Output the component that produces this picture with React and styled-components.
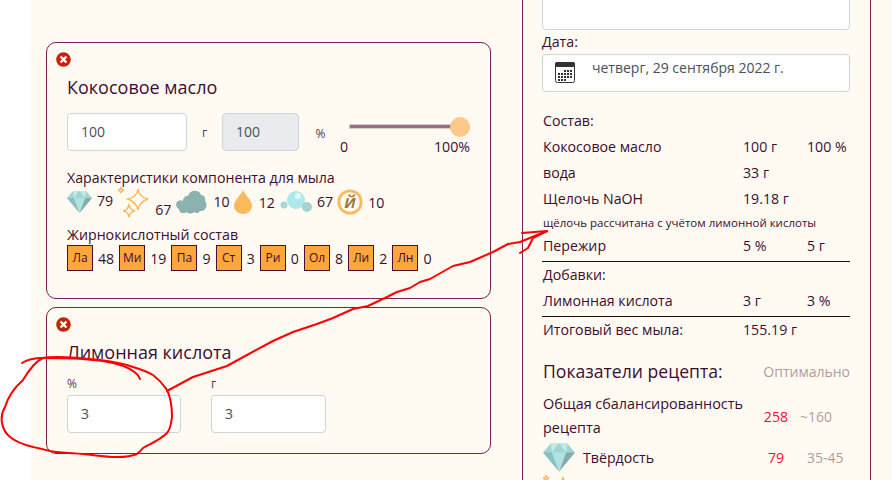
import React from "react";
import styled, { createGlobalStyle } from "styled-components";
import { FaTimesCircle } from "react-icons/fa";

const GlobalStyle = createGlobalStyle`
  html, body {
    margin: 0;
    padding: 0;
    background: #fff;
  }
  body {
    font-family: "Open Sans", "Noto Sans", sans-serif;
    font-size: 14.2px;
    color: #3d0c30;
  }
`;

const Page = styled.div`
  position: relative;
  width: 892px;
  height: 480px;
  overflow: hidden;
  padding-left: 31px;
  box-sizing: border-box;
`;

const Sheet = styled.div`
  display: flex;
  height: 100%;
  background: #fffbf2;
`;

const LeftColumn = styled.div`
  width: 445px;
  padding: 42px 31px 0 15px;
  display: flex;
  flex-direction: column;
  gap: 8px;
  flex-shrink: 0;
`;

const Card = styled.section`
  box-sizing: border-box;
  height: ${(p) => p.$height}px;
  flex-shrink: 0;
  border: 1px solid #7a1f50;
  border-radius: 10px;
  padding: 9px 20px 0;
`;

const RemoveButton = styled.button`
  display: block;
  border: 0;
  background: none;
  padding: 0;
  margin-left: -11px;
  width: 15px;
  height: 15px;
  color: #c5230f;
  font-size: 15px;
  line-height: 0;
`;

const CardTitle = styled.h3`
  margin: 7px 0 0;
  font-size: 18px;
  line-height: 26px;
  font-weight: 400;
`;

const InputRow = styled.div`
  display: flex;
  align-items: center;
  margin-top: 13px;
`;

const Field = styled.div`
  box-sizing: border-box;
  flex-shrink: 0;
  width: ${(p) => p.$width}px;
  height: 38px;
  line-height: 36px;
  padding: 0 13px;
  border: 1px solid #ced4da;
  border-radius: 4px;
  background: ${(p) => (p.$disabled ? "#e9ecef" : "#fff")};
  color: #495057;
  font-size: 14px;
`;

const Unit = styled.span`
  flex-shrink: 0;
  width: ${(p) => p.$width}px;
  text-align: center;
  font-size: 12px;
  color: #5a3355;
  padding-top: ${(p) => p.$drop || 0}px;
`;

const SliderBox = styled.div`
  flex-shrink: 0;
  width: 130px;
  height: 38px;
  margin-left: -2px;
`;

const SliderTrack = styled.div`
  position: relative;
  margin: 11px 2px 0 9px;
  height: 5px;
  background: #96707f;
  border-radius: 2px;
  box-shadow: 0 0 0 1px #d9cdc9 inset;
`;

const SliderThumb = styled.div`
  position: absolute;
  right: -2px;
  top: -7px;
  width: 20px;
  height: 20px;
  border-radius: 50%;
  background: #fdc88c;
`;

const SliderLabels = styled.div`
  display: flex;
  justify-content: space-between;
  margin-top: 8px;
  line-height: 20px;
`;

const SectionLabel = styled.div`
  margin-top: ${(p) => p.$top}px;
  line-height: ${(p) => p.$line || 20}px;
`;

const StatRow = styled.div`
  display: flex;
  align-items: center;
  height: 32px;
  margin-top: -1px;
`;

const StatValue = styled.span`
  margin: 0 ${(p) => p.$right}px ${(p) => p.$lift || 0}px ${(p) => p.$left}px;
  padding-top: ${(p) => p.$drop || 0}px;
`;

const ChipRow = styled.div`
  display: flex;
  align-items: center;
  gap: 5px;
`;

const Chip = styled.span`
  box-sizing: border-box;
  width: 26px;
  height: 26px;
  border: 1px solid #4d0f2f;
  background: #ffa63d;
  font-size: 12px;
  line-height: 24px;
  text-align: center;
`;

const ChipValue = styled.span`
  min-width: 8.2px;
`;

const LabeledFields = styled.div`
  display: flex;
  gap: 30px;
  margin-top: 10px;
`;

const LabeledField = styled.div`
  display: flex;
  flex-direction: column;
  gap: 2px;
`;

const SmallLabel = styled.label`
  font-size: 12px;
  line-height: 18px;
  color: #5a3355;
`;

const SidePanel = styled.aside`
  box-sizing: border-box;
  width: 349px;
  margin-top: -30px;
  height: 510px;
  flex-shrink: 0;
  overflow: hidden;
  border-left: 1px solid #7a1f50;
  border-right: 1px solid #7a1f50;
  padding: 0 20px 0 19px;
`;

const NotesBox = styled.div`
  height: 60px;
  box-sizing: border-box;
  background: #fff;
  border: 1px solid #ced4da;
  border-radius: 4px;
`;

const DateLabel = styled.div`
  margin-top: 1px;
  line-height: 22px;
`;

const DateField = styled.div`
  display: flex;
  align-items: flex-start;
  gap: 17px;
  box-sizing: border-box;
  height: 38px;
  margin-top: 1px;
  padding: 3px 12px 0;
  background: #fff;
  border: 1px solid #ced4da;
  border-radius: 4px;
  color: #495057;
  line-height: 20px;
  font-size: 14px;
`;

const Recipe = styled.div`
  margin-top: 16px;
`;

const Row = styled.div`
  display: grid;
  grid-template-columns: 200px 64px 1fr;
  height: 26px;
  line-height: 26px;
  padding-left: 1px;
  white-space: nowrap;
`;

const Note = styled.div`
  font-size: 11.5px;
  line-height: 21px;
  padding-left: 1px;
  white-space: nowrap;
`;

const Rule = styled.hr`
  margin: 2px 0 0;
  border: 0;
  border-top: 1px solid #111;
`;

const ScoreHeader = styled.div`
  display: flex;
  justify-content: space-between;
  align-items: center;
  margin-top: 15px;
  padding-left: 1px;
`;

const ScoreTitle = styled.h4`
  margin: 0;
  font-size: 17.6px;
  line-height: 26px;
  font-weight: 400;
`;

const Muted = styled.span`
  color: #b39ba3;
  font-size: 14px;
  padding-left: ${(p) => p.$pad || 0}px;
`;

const BalanceRow = styled.div`
  display: grid;
  grid-template-columns: 216px 34px 1fr;
  align-items: center;
  margin-top: 8px;
  padding-left: 1px;
`;

const BalanceName = styled.div`
  line-height: 24px;
  font-size: 14.4px;
  white-space: nowrap;
`;

const Hot = styled.span`
  color: #fb0a37;
  text-align: center;
`;

const HardRow = styled.div`
  display: grid;
  grid-template-columns: 32px 184px 34px 1fr;
  align-items: center;
  margin-top: 3px;
  padding-left: 1px;
`;

const HardName = styled.span`
  padding-left: 8px;
`;

const NextIcon = styled.div`
  margin: 3px 0 0 1px;
`;

const Scribble = styled.svg`
  position: absolute;
  inset: 0;
  pointer-events: none;
`;

const Diamond = ({ width = 25, height = 22 }) => (
  <svg width={width} height={height} viewBox="0 0 25 22" style={{ flexShrink: 0 }}>
    <path d="M6 0h13l6 7-12.500 15L0 7z" fill="#9fd5d2" />
    <path d="M0 7h7l5.500 15z" fill="#8bbfc0" />
    <path d="M25 7h-7l-5.500 15z" fill="#86adae" />
    <path d="M7 7h11l-5.500 15z" fill="#b0e3df" />
    <path d="M6 0l1 7 5-7zM19 0l-1 7-5-7z" fill="#c2ebe6" />
  </svg>
);

const Sparkles = () => (
  <svg width="31" height="31" viewBox="0 0 31 31" style={{ flexShrink: 0 }} fill="none" stroke="#fdb95c" strokeWidth="1.500">
    <path d="M20 2c1 6 4 9 10 10-6 2-9 5-10 11-1-6-5-9-10-11 6-1 9-4 10-10z" />
    <path d="M11 18c1 3 2 5 5 6-3 1-4 2-5 6-1-4-2-5-5-6 3-1 4-3 5-6z" />
    <path d="M3 0c0 2 1 3 3 3-2 1-3 2-3 3 0-1-1-2-3-3 2 0 3-1 3-3z" />
  </svg>
);

const Cloud = () => (
  <svg width="31" height="24" viewBox="0 0 31 24" style={{ flexShrink: 0 }}>
    <path
      d="M7 23c-3 0-4-2-4-4-3-1-4-6-1-8 2-1 4-1 5 0 0-3 2-5 5-5 1-3 4-6 8-5 3 0 4 2 5 4 3 0 5 3 4 6 2 2 2 6 0 8-1 2-3 2-5 2-1 2-4 3-6 1-2 2-6 2-7 0-1 1-3 1-4 1z"
      fill="#8ab3b0"
    />
  </svg>
);

const Drop = () => (
  <svg width="18" height="24" viewBox="0 0 18 24" style={{ flexShrink: 0 }}>
    <path d="M9 0c2 5 9 10 9 16a9 8 0 0 1-18 0C0 10 7 5 9 0z" fill="#fdb95c" />
  </svg>
);

const Bubbles = () => (
  <svg width="32" height="22" viewBox="0 0 32 22" style={{ flexShrink: 0 }}>
    <circle cx="4" cy="14" r="3.500" fill="#a5d8d4" />
    <circle cx="16" cy="9" r="9" fill="#ade9e8" />
    <circle cx="18" cy="5" r="3" fill="#dff8f7" />
    <circle cx="27" cy="16" r="5" fill="#a5d3d0" />
  </svg>
);

const Iodine = () => (
  <svg width="26" height="26" viewBox="0 0 26 26" style={{ flexShrink: 0 }}>
    <circle cx="13" cy="13" r="11.200" fill="#fffbf2" stroke="#fdb95c" strokeWidth="2.800" />
    <text x="13" y="18.500" textAnchor="middle" fontSize="15" fontWeight="700" fontStyle="italic" fontFamily="Open Sans, sans-serif" fill="#9c7742">
      Й
    </text>
  </svg>
);

const CalendarIcon = () => (
  <svg width="20" height="21" viewBox="0 0 20 21" style={{ flexShrink: 0, marginTop: 4 }}>
    <rect x="0.500" y="0.500" width="19" height="20" rx="2" fill="#fff" stroke="#333" />
    <rect x="0" y="0" width="20" height="5" rx="2" fill="#333" />
    {[
      [9, 8], [12, 8], [15, 8],
      [3, 11], [6, 11], [9, 11], [12, 11], [15, 11],
      [3, 14], [6, 14], [9, 14], [12, 14], [15, 14],
      [3, 17], [6, 17], [9, 17],
    ].map(([x, y]) => (
      <rect key={`${x}-${y}`} x={x} y={y} width="2" height="2" fill="#333" />
    ))}
  </svg>
);

const acids = [
  ["Ла", 48],
  ["Ми", 19],
  ["Па", 9],
  ["Ст", 3],
  ["Ри", 0],
  ["Ол", 8],
  ["Ли", 2],
  ["Лн", 0],
];

export default function App() {
  return (
    <Page>
      <GlobalStyle />
      <Sheet>
        <LeftColumn>
          <Card $height={257}>
            <RemoveButton aria-label="Удалить">
              <FaTimesCircle />
            </RemoveButton>
            <CardTitle>Кокосовое масло</CardTitle>
            <InputRow>
              <Field $width={120}>100</Field>
              <Unit $width={35}>г</Unit>
              <Field $width={77} $disabled>
                100
              </Field>
              <Unit $width={43} $drop={2}>
                %
              </Unit>
              <SliderBox>
                <SliderTrack>
                  <SliderThumb />
                </SliderTrack>
                <SliderLabels>
                  <span>0</span>
                  <span>100%</span>
                </SliderLabels>
              </SliderBox>
            </InputRow>
            <SectionLabel $top={18} $line={18}>Характеристики компонента для мыла</SectionLabel>
            <StatRow>
              <Diamond />
              <StatValue $left={5} $right={5} $lift={4}>79</StatValue>
              <Sparkles />
              <StatValue $left={6} $right={5} $drop={14}>67</StatValue>
              <Cloud />
              <StatValue $left={6} $right={4} $lift={2}>10</StatValue>
              <Drop />
              <StatValue $left={7} $right={5}>12</StatValue>
              <Bubbles />
              <StatValue $left={5} $right={4} $lift={2}>67</StatValue>
              <Iodine />
              <StatValue $left={5} $right={0}>10</StatValue>
            </StatRow>
            <SectionLabel $top={7}>Жирнокислотный состав</SectionLabel>
            <ChipRow>
              {acids.map(([name, value]) => (
                <React.Fragment key={name}>
                  <Chip>{name}</Chip>
                  <ChipValue>{value}</ChipValue>
                </React.Fragment>
              ))}
            </ChipRow>
          </Card>
          <Card $height={147}>
            <RemoveButton aria-label="Удалить">
              <FaTimesCircle />
            </RemoveButton>
            <CardTitle>Лимонная кислота</CardTitle>
            <LabeledFields>
              <LabeledField>
                <SmallLabel>%</SmallLabel>
                <Field $width={114}>3</Field>
              </LabeledField>
              <LabeledField>
                <SmallLabel>г</SmallLabel>
                <Field $width={115}>3</Field>
              </LabeledField>
            </LabeledFields>
          </Card>
        </LeftColumn>
        <SidePanel>
          <NotesBox />
          <DateLabel>Дата:</DateLabel>
          <DateField>
            <CalendarIcon />
            четверг, 29 сентября 2022 г.
          </DateField>
          <Recipe>
            <Row><span>Состав:</span></Row>
            <Row><span>Кокосовое масло</span><span>100 г</span><span>100 %</span></Row>
            <Row><span>вода</span><span>33 г</span></Row>
            <Row><span>Щелочь NaOH</span><span>19.18 г</span></Row>
            <Note>щёлочь рассчитана с учётом лимонной кислоты</Note>
            <Row><span>Пережир</span><span>5 %</span><span>5 г</span></Row>
            <Rule />
            <Row><span>Добавки:</span></Row>
            <Row><span>Лимонная кислота</span><span>3 г</span><span>3 %</span></Row>
            <Rule />
            <Row><span>Итоговый вес мыла:</span><span>155.19 г</span></Row>
          </Recipe>
          <ScoreHeader>
            <ScoreTitle>Показатели рецепта:</ScoreTitle>
            <Muted>Оптимально</Muted>
          </ScoreHeader>
          <BalanceRow>
            <BalanceName>
              Общая сбалансированность
              <br />
              рецепта
            </BalanceName>
            <Hot>258</Hot>
            <Muted $pad={7}>~160</Muted>
          </BalanceRow>
          <HardRow>
            <Diamond width={32} height={29} />
            <HardName>Твёрдость</HardName>
            <Hot>79</Hot>
            <Muted $pad={14}>35-45</Muted>
          </HardRow>
          <NextIcon>
            <Sparkles />
          </NextIcon>
        </SidePanel>
      </Sheet>
      <Scribble width="892" height="480" viewBox="0 0 892 480" fill="none" stroke="#f00" strokeWidth="2" strokeLinecap="round" strokeLinejoin="round">
        <path d="M22 363C28 359 35 358 43 358C58 358 72 358 83 359C95 360 105 361 113 363C125 366 137 371 140 379" />
        <path d="M43 358C55 356 82 358 100 360C115 362 125 364 133 367C143 370 148 372 153 375C161 381 164 386 167 390C171 398 172 408 172 417C171 425 170 430 167 433C160 440 150 444 143 448C140 452 138 453 137 454C130 457 124 457 117 457C105 457 94 455 83 454C70 453 60 453 50 451C42 449 38 448 33 447C25 445 16 442 10 437C5 433 3 428 2 423C1 417 2 412 5 407C8 397 14 388 23 380C29 370 36 361 43 358" />
        <path d="M167 391L193 377L227 366L247 355L273 341L293 332L317 324L333 318L353 309L368 306L387 297L397 292L410 288L420 282L430 279L453 266L470 262L493 252L508 244L520 242L547 231" />
        <path d="M522 233L547 231L533 238L528 248L520 253" />
      </Scribble>
    </Page>
  );
}
